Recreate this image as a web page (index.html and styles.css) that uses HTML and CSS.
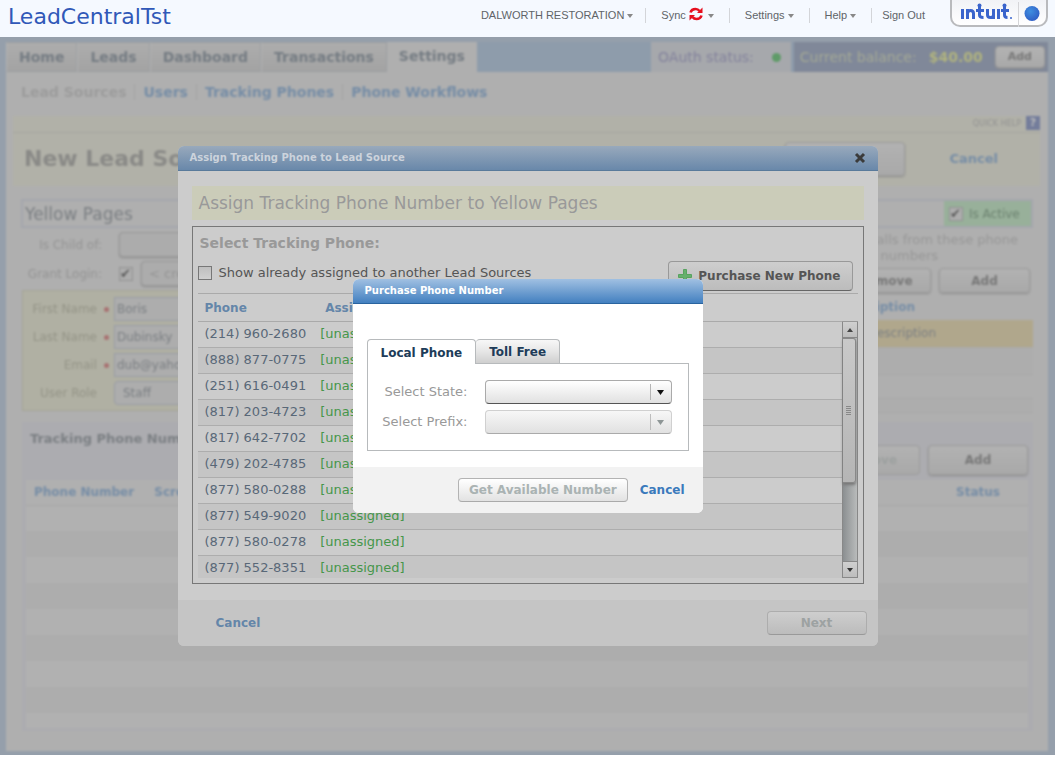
FILE: index.html
```html
<!DOCTYPE html>
<html lang="en">
<head>
<meta charset="utf-8">
<title>LeadCentralTst</title>
<link rel="stylesheet" href="styles.css">
</head>
<body>
<header class="topbar">
  <h1 class="brand">LeadCentralTst</h1>
  <nav class="account">
    <button class="account-item">DALWORTH RESTORATION<i class="caret"></i></button>
    <button class="account-item">Sync
      <svg class="sync" width="14" height="14" viewBox="0 0 14 14" fill="none" stroke="#e60f1e" stroke-width="2.6"><path d="M1.500 5.500Q2.500 2 6.500 2Q9 2 10.500 4"/><path d="M12.500 8.500Q11.500 12 7.500 12Q5 12 3.500 10"/><path d="M13.500 .5V6H8Z" fill="#e60f1e" stroke="none"/><path d="M.5 13.500V8H6Z" fill="#e60f1e" stroke="none"/></svg><i class="caret"></i></button>
    <button class="account-item">Settings<i class="caret"></i></button>
    <button class="account-item">Help<i class="caret"></i></button>
    <a class="account-item" href="#">Sign Out</a>
  </nav>
  <div class="intuit">
    <svg width="98" height="28" viewBox="0 0 98 28" role="img" aria-label="intuit">
      <defs><radialGradient id="ball" cx=".4" cy=".35" r=".7"><stop offset="0" stop-color="#3f8ee0"/><stop offset="1" stop-color="#2f5cc4"/></radialGradient></defs>
      <g fill="none" stroke="#3a64cc" stroke-width="3">
        <path d="M12.500 9V19"/>
        <path d="M17.500 19V9M17.500 13.500Q17.500 10.500 20.500 10.500Q23.500 10.500 23.500 13.500V19"/>
        <path d="M29.500 6V15Q29.500 17.500 33.500 17.500M26 10.500H34"/>
        <path d="M37.500 9V15Q37.500 17.500 40.500 17.500Q43.500 17.500 43.500 15M43.500 9V19"/>
        <path d="M48.500 9V19"/>
        <path d="M54.500 6V15Q54.500 17.500 57.500 17.500M51 10.500H59"/>
      </g>
      <g fill="#3a64cc"><circle cx="29.500" cy="5.500" r="2"/><circle cx="54.500" cy="5.500" r="2"/><circle cx="61" cy="18" r="1"/></g>
      <path d="M68.500 2V27" stroke="#d5d5d8"/>
      <circle cx="82" cy="13.500" r="7.500" fill="url(#ball)"/>
    </svg>
  </div>
</header>

<main class="stage">
  <div class="app">
    <div class="mainnav">
      <a class="tab" href="#">Home</a><a class="tab" href="#">Leads</a><a class="tab" href="#">Dashboard</a><a class="tab" href="#">Transactions</a><a class="tab tab-on" href="#">Settings</a>
      <div class="oauth">OAuth status:<i class="dot"></i></div>
      <div class="balance"><span>Current balance:</span><b>$40.00</b><button class="dim-btn">Add</button></div>
    </div>
    <div class="page">
      <nav class="subnav">
        <a class="current" href="#">Lead Sources</a><a href="#">Users</a><a href="#">Tracking Phones</a><a href="#">Phone Workflows</a>
      </nav>
      <div class="quick">QUICK HELP <i class="help">?</i></div>
      <div class="pagehead">
        <h2>New Lead So</h2>
        <button class="dim-btn save" aria-label="Save"></button>
        <a href="#">Cancel</a>
      </div>
      <div class="namerow">
        <input type="text" value="Yellow Pages" aria-label="Lead source name">
        <label class="active"><span class="tick"><input type="checkbox" checked></span>Is Active</label>
      </div>
      <div class="cols">
        <div class="left">
          <div class="field"><label for="parent">Is Child of:</label><select id="parent"><option></option></select></div>
          <div class="field"><label for="grant">Grant Login:</label><span class="tick"><input id="grant" type="checkbox" checked></span><select class="create" aria-label="Login user"><option>&lt; create new &gt;</option></select></div>
          <div class="person">
            <div class="prow"><label for="fn">First Name</label><i class="req"></i><input id="fn" type="text" value="Boris"></div>
            <div class="prow"><label for="ln">Last Name</label><i class="req"></i><input id="ln" type="text" value="Dubinsky"></div>
            <div class="prow"><label for="em">Email</label><i class="req"></i><input id="em" type="text" value="dub@yahoo.com"></div>
            <div class="prow"><label for="ro">User Role</label><i></i><select id="ro"><option>Staff</option></select></div>
          </div>
        </div>
        <div class="right">
          <p class="note">calls from these phone</p>
          <p class="note note-end">numbers</p>
          <div class="btns"><button class="dim-btn">Remove</button><button class="dim-btn">Add</button></div>
          <table class="desc">
            <thead><tr><th>Description</th></tr></thead>
            <tbody><tr><td>Description</td></tr><tr><td></td></tr><tr><td></td></tr><tr><td></td></tr></tbody>
          </table>
        </div>
      </div>
      <section class="phones">
        <div class="phones-head"><h3>Tracking Phone Num</h3>
          <div class="btns"><button class="dim-btn off">Remove</button><button class="dim-btn">Add</button></div></div>
        <table class="numbers">
          <thead><tr><th>Phone Number</th><th>Scre</th><th class="status">Status</th></tr></thead>
          <tbody><tr><td colspan="3"></td></tr><tr><td colspan="3"></td></tr><tr><td colspan="3"></td></tr><tr><td colspan="3"></td></tr><tr><td colspan="3"></td></tr><tr><td colspan="3"></td></tr><tr><td colspan="3"></td></tr><tr><td colspan="3"></td></tr><tr><td colspan="3"></td></tr></tbody>
        </table>
      </section>
    </div>
  </div>

  <div class="layer">
    <section class="dialog assign" role="dialog" aria-labelledby="assign-title">
      <div class="dialog-title"><h2 id="assign-title">Assign Tracking Phone to Lead Source</h2>
        <button class="close" aria-label="Close"><svg width="12" height="12" viewBox="0 0 12 12" stroke="#3b3b3b" stroke-width="3"><path d="M2 2L10 10M10 2L2 10"/></svg></button></div>
      <div class="assign-body">
        <p class="banner">Assign Tracking Phone Number to Yellow Pages</p>
        <div class="picker">
          <div class="picker-head">
            <div>
              <h3>Select Tracking Phone:</h3>
              <label class="show"><input type="checkbox">Show already assigned to another Lead Sources</label>
            </div>
            <button class="btn purchase"><svg width="14" height="14" viewBox="0 0 14 14"><path d="M5.500 .5h3v5h5v3h-5v5h-3v-5h-5v-3h5z" fill="#66b06c" stroke="#57a35e"/></svg>Purchase New Phone</button>
          </div>
          <div class="list">
            <table class="grid">
              <thead><tr><th>Phone</th><th class="to">Assi</th></tr></thead>
              <tbody>
                <tr><td>(214) 960-2680</td><td class="free">[unassigned]</td></tr>
                <tr><td>(888) 877-0775</td><td class="free">[unassigned]</td></tr>
                <tr><td>(251) 616-0491</td><td class="free">[unassigned]</td></tr>
                <tr><td>(817) 203-4723</td><td class="free">[unassigned]</td></tr>
                <tr><td>(817) 642-7702</td><td class="free">[unassigned]</td></tr>
                <tr><td>(479) 202-4785</td><td class="free">[unassigned]</td></tr>
                <tr><td>(877) 580-0288</td><td class="free">[unassigned]</td></tr>
                <tr><td>(877) 549-9020</td><td class="free">[unassigned]</td></tr>
                <tr><td>(877) 580-0278</td><td class="free">[unassigned]</td></tr>
                <tr><td>(877) 552-8351</td><td class="free">[unassigned]</td></tr>
              </tbody>
            </table>
            <div class="scroll">
              <div class="scroll-head"></div>
              <div class="bar">
                <button class="arrow" aria-label="Scroll up"><svg width="6" height="4" viewBox="0 0 6 4"><path d="M0 4L3 0L6 4Z" fill="#444"/></svg></button>
                <div class="track"><div class="thumb"><i></i></div></div>
                <button class="arrow" aria-label="Scroll down"><svg width="6" height="4" viewBox="0 0 6 4"><path d="M0 0H6L3 4Z" fill="#333"/></svg></button>
              </div>
            </div>
          </div>
        </div>
      </div>
      <div class="dialog-foot"><a href="#">Cancel</a><button class="btn next" disabled>Next</button></div>
    </section>
  </div>

  <div class="layer">
    <section class="dialog buy" role="dialog" aria-labelledby="buy-title">
      <div class="dialog-title"><h2 id="buy-title">Purchase Phone Number</h2></div>
      <div class="buy-body">
        <div class="buy-tabs"><button class="on">Local Phone</button><button>Toll Free</button></div>
        <div class="buy-panel">
          <label for="state">Select State:</label>
          <span class="combo"><select id="state"><option></option></select><svg width="22" height="18" viewBox="0 0 22 18"><path d="M.5 1V17" stroke="#b5b5b5"/><path d="M7 7H14L10.500 12Z" fill="#111"/></svg></span>
          <label for="prefix">Select Prefix:</label>
          <span class="combo"><select id="prefix" disabled><option></option></select><svg width="22" height="18" viewBox="0 0 22 18"><path d="M.5 1V17" stroke="#bdbdbd"/><path d="M7 7H14L10.500 12Z" fill="#8e9696"/></svg></span>
        </div>
      </div>
      <div class="dialog-foot"><button class="btn get" disabled>Get Available Number</button><a href="#">Cancel</a></div>
    </section>
  </div>
</main>
</body>
</html>
```
FILE: styles.css
```css
* { box-sizing: border-box; }
body { margin: 0; background: #fff; font: 13px/16px "DejaVu Sans", Verdana, sans-serif; }
h1, h2, h3, p { margin: 0; }
a { text-decoration: none; }
button, input, select { font: inherit; color: inherit; margin: 0; }
button, select { appearance: none; cursor: pointer; }
table { border-collapse: collapse; width: 100%; }
th { text-align: left; }

.topbar { height: 37px; display: flex; align-items: flex-start; padding: 0 7px 0 8px; background: #f5f9ff; }
.brand { flex: 1; font: 22px/34px "DejaVu Sans", Verdana, sans-serif; color: #3058b8; }
.account { display: flex; padding-top: 8px; }
.account-item { display: flex; align-items: center; height: 15px; padding: 0 15px; border: 0; border-left: 1px solid #d3d5d9; background: none; font: 11px/15px "Liberation Sans", Arial, sans-serif; color: #606468; white-space: nowrap; }
.account-item:first-child { border-left: 0; padding-right: 12px; }
.account-item:last-child { padding: 0 25px 0 10px; }
.caret { margin-left: 3px; border: 3px solid transparent; border-top: 4px solid #888; border-bottom: 0; }
.sync { margin: -3px 2px 0 3px; }
.intuit { width: 98px; height: 27px; border: 2px solid #b9babd; border-top: 0; border-radius: 0 0 10px 10px; background: linear-gradient(#f1f2f6, #fff); display: flex; justify-content: center; }
.intuit svg { flex: none; }

.stage { position: relative; height: 718px; background: #959fab; overflow: hidden; }
.app { filter: blur(1.3px); padding: 5px 7px 4px 6px; background: #959fab; color: #7b7f83; }
.app a { color: #768da6; }
.mainnav { display: flex; height: 30px; font-size: 14px; font-weight: bold; line-height: 29px; background: #8e9cab; }
.app .tab { padding: 0 12px; border: 1px solid #9b9ea1; border-left-color: #b3b3b3; background: linear-gradient(#adadad, #a3a3a3); color: #757c83; }
.app .tab-on { border: 0; background: #afafaf; }
.oauth { display: flex; align-items: center; gap: 18px; margin-left: auto; padding: 0 10px 0 7px; background: #a6a8ac; font-weight: normal; color: #83829c; }
.dot { width: 9px; height: 9px; border-radius: 50%; background: #5f9b68; }
.balance { display: flex; align-items: center; gap: 12px; margin-left: 3px; padding: 0 3px 0 6px; background: #808899; font-weight: normal; color: #a4a996; }
.balance b { color: #b0b37f; }
.dim-btn { padding: 0 12px; border: 1px solid #9b9b9b; border-radius: 4px; background: linear-gradient(#b2b2b2, #a9a9a9); box-shadow: 0 1px 2px #8d8d8d; font-weight: bold; color: #777; }
.balance .dim-btn { height: 22px; font-size: 11px; line-height: 20px; }
.dim-btn.off { color: #9ca09f; box-shadow: none; }

.page { padding: 8px 8px 20px 7px; background: #afafaf; }
.subnav { display: flex; height: 36px; padding: 4px 0 0 8px; font-size: 14px; font-weight: bold; }
.subnav a { height: 16px; padding-right: 8px; margin-right: 8px; border-right: 1px solid #a4a4a4; }
.subnav a:last-child { border: 0; }
.app .subnav .current { color: #9c9c9c; }
.quick { height: 17px; display: flex; justify-content: flex-end; gap: 5px; background: #b1b1a8; border-bottom: 1px solid #a5a59f; font-size: 8px; color: #929292; }
.help { width: 14px; height: 14px; background: #747d9b; color: #bbb; font: bold 11px/14px "DejaVu Sans", sans-serif; text-align: center; }
.pagehead { height: 53px; display: flex; align-items: center; padding: 0 42px 2px 11px; background: #b1b1a8; }
.pagehead h2 { flex: 1; font-size: 22px; color: #8a8a87; }
.pagehead a { margin-left: 44px; font-weight: bold; }
.save { width: 120px; height: 34px; }
.namerow { display: flex; align-items: center; height: 29px; margin: 13px 7px 0 8px; border: 2px solid #a4a6ad; }
.namerow input[type=text] { flex: 1; border: 0; background: none; font-size: 17px; padding: 0 2px; }
.active { display: flex; align-items: center; gap: 6px; height: 25px; width: 87px; padding-left: 5px; background: #98b09a; color: #6c8270; font-size: 12px; }
.tick { display: flex; width: 14px; height: 14px; }
.tick input { appearance: none; position: relative; width: 14px; height: 14px; border: 1px solid #929292; background: #adadad; }
.tick input:checked::after { content: "✔"; position: absolute; left: 0; top: -2px; color: #5d5d5d; font-size: 13px; }
.cols { display: grid; grid-template-columns: 1fr 1fr; gap: 20px; height: 194px; margin: 0 7px 0 9px; padding-top: 4px; }
.field { display: flex; align-items: center; gap: 17px; height: 25px; margin-bottom: 4px; color: #949494; }
.field label { width: 80px; text-align: right; white-space: nowrap; font-size: 12px; }
.field select { width: 300px; height: 25px; border: 1px solid #999; border-radius: 4px; background: #acacac; box-shadow: 0 1px 2px #8d8d8d; }
.field .create { margin-left: -9px; padding-left: 7px; width: 270px; }
.person { padding: 4px 0 3px; border: 1px solid #a4a498; background: #b0b0a3; }
.prow { display: flex; align-items: center; height: 28px; }
.prow label { width: 74px; text-align: right; color: #949487; font-size: 12px; white-space: nowrap; }
.prow i { width: 5px; height: 5px; margin: 0 5px 0 7px; border-radius: 50%; }
.prow .req { background: #a87272; }
.prow input, .prow select { width: 300px; height: 24px; border: 1px solid #999ca4; background: #adadad; padding: 0 2px; font-size: 12px; }
.prow select { border-radius: 4px; padding-left: 8px; }
.right { display: flex; flex-direction: column; }
.note { padding-right: 15px; text-align: right; color: #979797; }
.note-end { padding-right: 95px; }
.btns { display: flex; justify-content: flex-end; gap: 8px; }
.right .btns { padding: 4px 3px 0 0; }
.right .dim-btn { width: 91px; height: 25px; font-size: 12px; }
.desc th, .desc td { height: 27px; padding: 0 97px 0 0; text-align: right; }
.desc th { padding-right: 118px; color: #768da6; font-size: 12px; }
.desc td { border-bottom: 1px solid #a9a9a9; font-size: 12px; }
.desc tbody tr:nth-child(1) td { background: #b0a78c; }
.desc tbody tr:nth-child(2) td { background: #adadad; }
.desc tbody tr:nth-child(3) td { height: 24px; }
.desc tbody tr:nth-child(4) td { height: 14px; background: #adadad; }
.phones { margin: 0 7px 0 9px; padding: 0 5px 3px 4px; background: #acacb0; }
.phones-head { display: flex; justify-content: space-between; height: 58px; padding: 9px 0 0 4px; }
.phones-head .btns { padding-top: 14px; }
.phones-head h3 { font-size: 13px; }
.phones-head .dim-btn { width: 100px; height: 30px; font-size: 12px; }
.numbers th { height: 25px; padding-left: 8px; background: #b0b0b0; color: #768da6; font-size: 12px; border-bottom: 1px solid #a6a6a6; width: 12%; white-space: nowrap; }
.numbers .status { width: auto; text-align: right; padding-right: 28px; }
.numbers td { height: 26px; padding: 0; background: #b1b1b1; }
.numbers tr:nth-child(even) td { background: #adadad; }
.numbers tr:last-child td { height: 15px; }

.layer { position: absolute; inset: 0; display: flex; align-items: center; justify-content: center; pointer-events: none; }
.dialog { pointer-events: auto; border-radius: 6px; overflow: hidden; }
.dialog a { font-size: 12px; font-weight: bold; color: #3b7abc; }
.dialog-title { display: flex; align-items: center; justify-content: space-between; height: 25px; padding: 0 12px; border-bottom: 1px solid #2a649f; background: linear-gradient(#a0c0e2, #4380c0); color: #fff; }
.dialog-title h2 { font-size: 10px; line-height: 16px; }
.dialog-foot { display: flex; align-items: center; height: 46px; background: #f2f2f2; }
.btn { height: 24px; border: 1px solid #b3b3b3; border-bottom-color: #777; border-radius: 4px; background: linear-gradient(#fff, #e2e2e2); font-size: 12px; font-weight: bold; color: #222; }
.btn:disabled { color: #aab3b3; border-bottom-color: #aaa; }

.assign { width: 700px; max-width: 100%; background: #ccc; }
.assign a { color: #6486a9; }
.assign .dialog-title { border-bottom-color: #597a9b; background: linear-gradient(#98a9bc, #6988aa); color: #ccd3dc; }
.close { display: flex; padding: 0; border: 0; background: none; }
.assign .dialog-foot { justify-content: space-between; padding: 0 11px 0 38px; background: #c5c5c5; }
.assign .btn { background: linear-gradient(#cecece, #bcbcbc); border-color: #999; border-bottom-color: #666; color: #555; }
.assign .next { width: 100px; border-color: #adadad; border-bottom-color: #999; color: #9da2a2; }
.assign-body { padding: 15px 14px 16px; }
.banner { padding: 0 7px; background: #cbccb9; font-size: 17px; line-height: 34px; color: #999; }
.picker { margin-top: 6px; padding: 0 5px 5px; border: 1px solid #777; }
.picker-head { display: flex; justify-content: space-between; height: 66px; padding: 8px 5px 0 0; }
.picker h3 { padding-left: 2px; font-size: 14px; color: #999; }
.show { display: flex; align-items: center; gap: 7px; margin-top: 14px; color: #555; }
.show input { appearance: none; width: 14px; height: 14px; border: 1px solid #777; background: linear-gradient(#bfbfbf, #d0d0d0); }
.purchase { display: flex; align-items: center; gap: 6px; align-self: flex-end; margin-bottom: 2px; padding: 0 11px 0 9px; }
.assign .purchase { height: 30px; }
.list { display: grid; grid-template-columns: 1fr 16px; height: 285px; overflow: hidden; }
.grid { align-self: start; border-collapse: separate; border-spacing: 0; }
.grid th { height: 29px; padding: 0 7px; border-top: 1px solid #aaa; border-bottom: 1px solid #aaa; font-size: 12px; color: #6486a9; }
.grid .to { padding-left: 12px; }
.grid th:first-child { width: 115px; }
.grid td { height: 26px; padding: 0 7px 2px; border-bottom: 1px solid #adadad; color: #596878; white-space: nowrap; }
.grid tbody tr:nth-child(even) { background: #c5c5c5; }
.grid .free { color: #45964a; }
.scroll { display: flex; flex-direction: column; height: 285px; }
.scroll-head { height: 29px; border-top: 1px solid #aaa; border-bottom: 1px solid #999; }
.bar { flex: 1; display: flex; flex-direction: column; border: 1px solid #888; border-top: 0; }
.arrow { display: flex; align-items: center; justify-content: center; height: 16px; padding: 0; border: 0; background: linear-gradient(#d0d0d0, #bdbdbd); border-bottom: 1px solid #888; }
.arrow:last-child { border-top: 1px solid #888; border-bottom: 0; }
.track { flex: 1; background: linear-gradient(90deg, #8b8f91, #b9bbbb); }
.thumb { display: flex; align-items: center; justify-content: center; width: 13px; height: 145px; border: 1px solid #888; border-left: 0; border-radius: 0 3px 3px 0; background: linear-gradient(#c9c9c9, #b5b5b5); box-shadow: 0 2px 3px #777; }
.thumb i { width: 5px; height: 9px; background: repeating-linear-gradient(#888 0 1px, transparent 1px 2px); }

.buy { width: 350px; max-width: 100%; background: #fff; }
.buy-body { padding: 35px 14px 16px; }
.buy-tabs { display: flex; }
.buy-tabs button { height: 24px; padding: 0 13px; border: 1px solid #b7babc; border-bottom: 0; border-radius: 4px 4px 0 0; background: linear-gradient(#f7f7f7, #e6e6e6 50%, #cfcfcf); font-size: 12px; font-weight: bold; color: #203c59; }
.buy-tabs button + button { border-left: 0; }
.buy-tabs .on { height: 25px; margin-bottom: -1px; padding: 2px 13px 0; background: #fff; position: relative; }
.buy-panel { display: grid; grid-template-columns: 100px 187px; column-gap: 17px; row-gap: 6px; align-items: center; padding: 16px 0; border: 1px solid #b7babc; }
.buy-panel label { text-align: right; color: #999; }
.combo { display: block; position: relative; height: 24px; }
.combo select { display: block; width: 100%; height: 24px; border: 1px solid #aaa; border-bottom-color: #555; border-radius: 4px; background: linear-gradient(#fff, #e1e1e1); }
.combo select:disabled { border-color: #d0d0d0; border-bottom-color: #aaa; opacity: 1; background: linear-gradient(#f7f7f7, #e1e1e1); }
.combo svg { position: absolute; right: 0; top: 3px; pointer-events: none; }
.buy .dialog-foot { justify-content: flex-end; gap: 12px; padding-right: 18px; }
.get { padding: 0 10px; }
```
